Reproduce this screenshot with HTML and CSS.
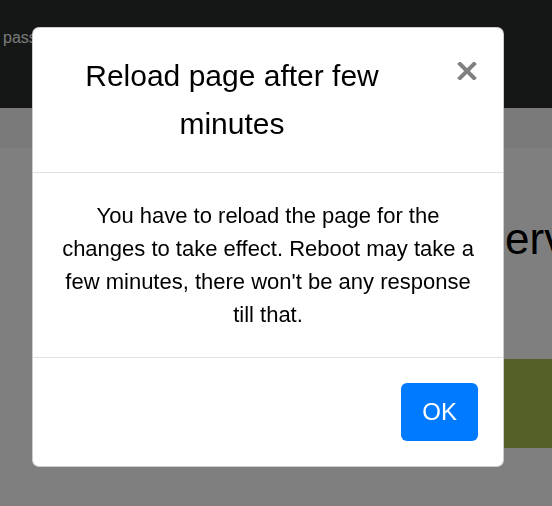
FILE: index.html
```html
<!DOCTYPE html>
<html lang="en">
<head>
    <meta charset="UTF-8">
    <meta name="viewport" content="width=device-width, initial-scale=1.0">
    <title>Reboot</title>
    <link rel="stylesheet" href="styles.css">
</head>
<body>
    <div class="navbar">
        <span class="nav-link">password</span>
    </div>
    <div class="subbar"></div>
    <div class="content">
        <h1 class="page-title">Reboot server</h1>
        <div class="reboot-btn"></div>
    </div>

    <div class="backdrop">
        <div class="modal">
            <div class="modal-header">
                <h5 class="modal-title">Reload page after few minutes</h5>
                <button class="close" type="button" aria-label="Close">
                    <svg width="20" height="18" viewBox="0 0 20 18">
                        <path d="M3 2 L17 16 M17 2 L3 16" stroke="#808080" stroke-width="4" stroke-linecap="square"/>
                    </svg>
                </button>
            </div>
            <div class="modal-body">
                You have to reload the page for the changes to take effect. Reboot may take a few minutes, there won't be any response till that.
            </div>
            <div class="modal-footer">
                <button class="btn-ok" type="button">OK</button>
            </div>
        </div>
    </div>
</body>
</html>
```

FILE: styles.css
```css
body {
    font-family: "Liberation Sans", Arial, sans-serif;
    background-color: white;
    margin: 0;
    padding: 0;
    overflow: hidden;
    height: 506px;
}

.navbar {
    height: 108px;
    background-color: #2b2d2d;
    padding-top: 28px;
    box-sizing: border-box;
}

.navbar .nav-link {
    display: block;
    margin-left: 3px;
    color: #f2f2f2;
    font-size: 16px;
    line-height: 20px;
}

.subbar {
    height: 40px;
    background-color: #f4f4f4;
}

.content {
    padding-left: 329px;
    white-space: nowrap;
}

.page-title {
    margin: 64px 0 0;
    font-size: 44px;
    font-weight: normal;
    line-height: 53px;
    color: #000;
}

.reboot-btn {
    margin-top: 94px;
    margin-left: -40px;
    width: 300px;
    height: 89px;
    background-color: #a6be4c;
}

/* capa oscura detras del modal */
.backdrop {
    position: fixed;
    top: 0;
    left: 0;
    right: 0;
    bottom: 0;
    background-color: rgba(0, 0, 0, 0.5);
    padding: 27px 0 0 32px;
}

.modal {
    width: 472px;
    box-sizing: border-box;
    background-color: white;
    border: 1px solid rgba(0, 0, 0, 0.2);
    border-radius: 7px;
    color: #000;
}

.modal-header {
    display: flex;
    align-items: flex-start;
    padding: 24px 26px;
    border-bottom: 1px solid #dee2e6;
}

.modal-title {
    flex: 1;
    margin: 0;
    text-align: center;
    font-size: 30px;
    font-weight: normal;
    line-height: 48px;
}

.close {
    margin: 10px 0 0 52px;
    padding: 0;
    width: 20px;
    height: 18px;
    border: none;
    background: none;
    cursor: pointer;
}

.close svg {
    display: block;
}

.modal-body {
    padding: 26px;
    text-align: center;
    font-size: 22px;
    line-height: 33px;
}

.modal-footer {
    display: flex;
    justify-content: flex-end;
    padding: 25px;
    border-top: 1px solid #dee2e6;
}

.btn-ok {
    background-color: #007bff;
    color: white;
    border: none;
    border-radius: 6px;
    padding: 11px 21px;
    font-family: "Liberation Sans", Arial, sans-serif;
    font-size: 24px;
    line-height: 36px;
    cursor: pointer;
}
```
